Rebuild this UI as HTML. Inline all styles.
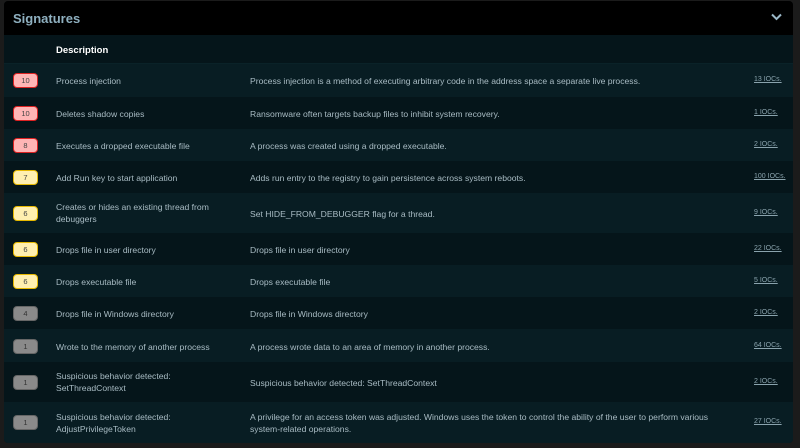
<!DOCTYPE html>
<html><head><style>
*{margin:0;padding:0;box-sizing:border-box}
body{width:800px;height:448px;background:#1b1b1b;font-family:"Liberation Sans",sans-serif;overflow:hidden;position:relative}
.panel{position:absolute;left:4px;top:1px;width:789px;height:442px;background:#061418;border-radius:4px;overflow:hidden}
.hdr{height:34px;background:#000;position:relative}
.hdr .t{position:absolute;left:9px;top:10px;font-size:13px;font-weight:bold;color:#8fb0c0}
.hdr svg{position:absolute;right:11px;top:12px}
.th{height:29px;background:#05151a;position:relative;border-bottom:1px solid #0a2228}
.th span{position:absolute;left:52px;top:10px;font-size:9.5px;font-weight:bold;color:#fff}
.r{position:relative;font-size:8.6px;color:#a9bcc4}
.r:nth-child(odd){background:#081d23}
.r:nth-child(even){background:#05151a}
.b{position:absolute;left:9px;width:25px;height:15px;border-radius:4px;font-size:7.5px;text-align:center;line-height:13px;color:#444;border:1px solid}
.red{background:#ffb5b5;border-color:#d22}
.yel{background:#ffefb0;border-color:#e6b800}
.gry{background:#8a8a8a;border-color:#666;color:#333}
.c2{position:absolute;left:52px;line-height:12px;width:185px}
.c3{position:absolute;left:246px;line-height:12px;width:478px}
.c4{position:absolute;left:750px;text-decoration:underline;font-size:7px;color:#8aa3ad}
</style></head><body>
<div class="panel">
<div class="hdr"><span class="t">Signatures</span><svg width="11" height="8" viewBox="0 0 11 8"><path d="M1 1.5 L5.5 6 L10 1.5" stroke="#9bb8c8" stroke-width="2" fill="none"/></svg></div>
<div class="th"><span>Description</span></div>
<div>
<div class="r" style="height:33px"><div class="b red" style="top:9px">10</div><div class="c2" style="top:11px">Process injection</div><div class="c3" style="top:11px">Process injection is a method of executing arbitrary code in the address space a separate live process.</div><div class="c4" style="top:12px">13 IOCs.</div></div>
<div class="r" style="height:32px"><div class="b red" style="top:9px">10</div><div class="c2" style="top:11px">Deletes shadow copies</div><div class="c3" style="top:11px">Ransomware often targets backup files to inhibit system recovery.</div><div class="c4" style="top:12px">1 IOCs.</div></div>
<div class="r" style="height:32px"><div class="b red" style="top:9px">8</div><div class="c2" style="top:11px">Executes a dropped executable file</div><div class="c3" style="top:11px">A process was created using a dropped executable.</div><div class="c4" style="top:12px">2 IOCs.</div></div>
<div class="r" style="height:32px"><div class="b yel" style="top:9px">7</div><div class="c2" style="top:11px">Add Run key to start application</div><div class="c3" style="top:11px">Adds run entry to the registry to gain persistence across system reboots.</div><div class="c4" style="top:12px">100 IOCs.</div></div>
<div class="r" style="height:40px"><div class="b yel" style="top:13px">6</div><div class="c2" style="top:8px">Creates or hides an existing thread from debuggers</div><div class="c3" style="top:15px">Set HIDE_FROM_DEBUGGER flag for a thread.</div><div class="c4" style="top:16px">9 IOCs.</div></div>
<div class="r" style="height:32px"><div class="b yel" style="top:9px">6</div><div class="c2" style="top:11px">Drops file in user directory</div><div class="c3" style="top:11px">Drops file in user directory</div><div class="c4" style="top:12px">22 IOCs.</div></div>
<div class="r" style="height:32px"><div class="b yel" style="top:9px">6</div><div class="c2" style="top:11px">Drops executable file</div><div class="c3" style="top:11px">Drops executable file</div><div class="c4" style="top:12px">5 IOCs.</div></div>
<div class="r" style="height:32px"><div class="b gry" style="top:9px">4</div><div class="c2" style="top:11px">Drops file in Windows directory</div><div class="c3" style="top:11px">Drops file in Windows directory</div><div class="c4" style="top:12px">2 IOCs.</div></div>
<div class="r" style="height:33px"><div class="b gry" style="top:10px">1</div><div class="c2" style="top:12px">Wrote to the memory of another process</div><div class="c3" style="top:12px">A process wrote data to an area of memory in another process.</div><div class="c4" style="top:13px">64 IOCs.</div></div>
<div class="r" style="height:40px"><div class="b gry" style="top:13px">1</div><div class="c2" style="top:8px">Suspicious behavior detected: SetThreadContext</div><div class="c3" style="top:15px">Suspicious behavior detected: SetThreadContext</div><div class="c4" style="top:16px">2 IOCs.</div></div>
<div class="r" style="height:41px"><div class="b gry" style="top:13px">1</div><div class="c2" style="top:9px">Suspicious behavior detected: AdjustPrivilegeToken</div><div class="c3" style="top:9px">A privilege for an access token was adjusted. Windows uses the token to control the ability of the user to perform various system-related operations.</div><div class="c4" style="top:16px">27 IOCs.</div></div>
</div>
</div>
</body></html>
